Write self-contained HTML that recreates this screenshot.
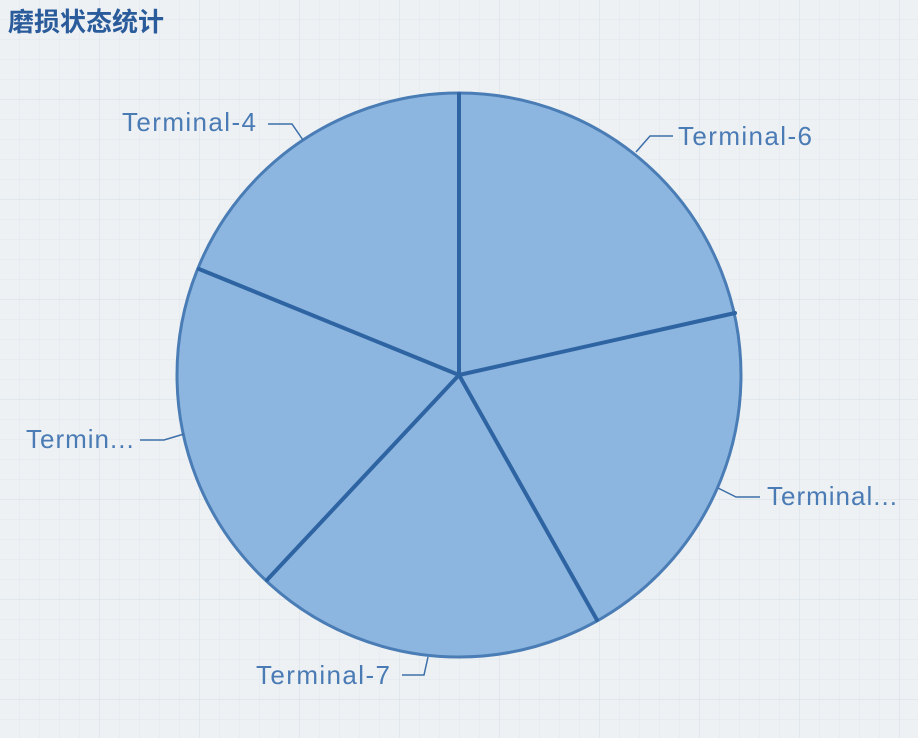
<!DOCTYPE html>
<html><head><meta charset="utf-8"><style>
html,body{margin:0;padding:0;width:918px;height:738px;overflow:hidden;background:#eef1f4;}
svg{display:block}
</style></head><body>
<svg width="918" height="738" viewBox="0 0 918 738" xmlns="http://www.w3.org/2000/svg">
<defs>
<pattern id="g" width="20" height="20" patternUnits="userSpaceOnUse">
<path d="M20 0V20M0 20H20" stroke="#dfe6ec" stroke-width="1" fill="none"/>
</pattern>
<pattern id="G" width="100" height="100" patternUnits="userSpaceOnUse">
<path d="M100 0V100M0 100H100" stroke="#d3dee8" stroke-width="1" fill="none"/>
</pattern>
</defs>
<rect width="918" height="738" fill="#eef1f4"/>
<rect width="918" height="738" fill="url(#g)"/>
<rect x="-60" y="-4" width="1000" height="742" fill="url(#G)"/>
<text x="8" y="31" font-family="Liberation Sans, Noto Sans CJK SC, sans-serif" font-weight="bold" font-size="26" fill="#2a5b9b">磨损状态统计</text>
<circle cx="459" cy="375" r="282" fill="#8cb6e0" stroke="#4a7db5" stroke-width="3"/>
<g stroke="#2f64a3" stroke-width="4" stroke-linecap="round">
<line x1="459" y1="375" x2="459" y2="94"/>
<line x1="459" y1="375" x2="735" y2="313"/>
<line x1="459" y1="375" x2="597" y2="620"/>
<line x1="459" y1="375" x2="267" y2="580"/>
<line x1="459" y1="375" x2="199" y2="269"/>
</g>
<g stroke="#3d6fa8" stroke-width="1.5" fill="none">
<path d="M268 124H292L303 140"/>
<path d="M673 136H650L636 152"/>
<path d="M760 497H736L718 488"/>
<path d="M140 440H164L184 434"/>
<path d="M402 675H424L428 657"/>
</g>
<g font-family="Liberation Sans, sans-serif" font-size="26" letter-spacing="1.4" fill="#4a7bb4">
<text x="122" y="131">Terminal-4</text>
<text x="678" y="145">Terminal-6</text>
<text x="767" y="505" letter-spacing="1">Terminal...</text>
<text x="26" y="448" letter-spacing="1">Termin...</text>
<text x="256" y="684">Terminal-7</text>
</g>
</svg>
</body></html>
